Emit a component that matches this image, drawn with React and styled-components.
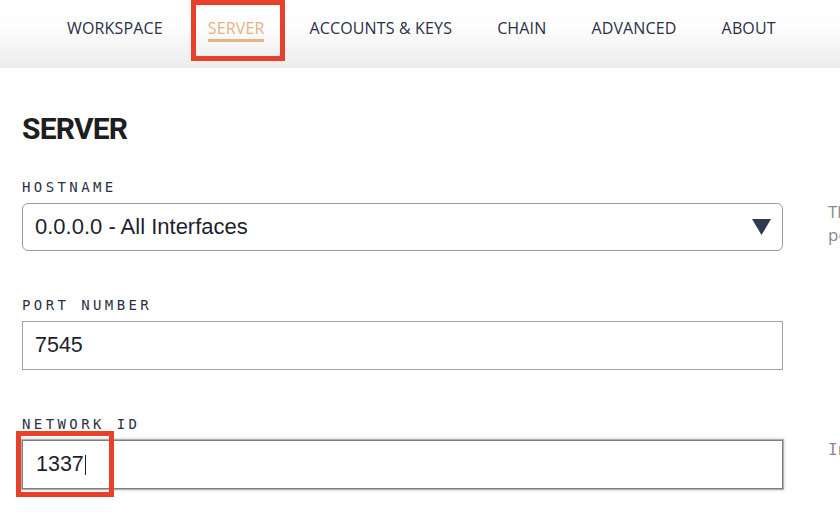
import React from 'react';
import styled, { createGlobalStyle, css } from 'styled-components';

// --- Styled Components ---
const GlobalStyle = createGlobalStyle`
  html, body {
    margin: 0;
    padding: 0;
    background: #ffffff;
    overflow: hidden;
  }
  *, *::before, *::after {
    box-sizing: border-box;
  }
`;

const Page = styled.div`
  width: 840px;
  height: 532px;
  overflow: hidden;
  background: #ffffff;
`;

const TopNav = styled.nav`
  display: flex;
  align-items: flex-start;
  gap: 45px;
  height: 68px;
  padding: 18px 0 0 67px;
  background: linear-gradient(to bottom, #ffffff 0%, #fdfdfd 40%, #ececec 100%);
`;

const NavItem = styled.div`
  position: relative;
  font-family: 'Open Sans', 'Noto Sans', sans-serif;
  font-size: 16px;
  line-height: 20px;
  letter-spacing: 0.15px;
  white-space: nowrap;
  color: ${(p) => (p.$active ? '#e2b583' : '#2b3046')};
  padding-bottom: 1px;
  border-bottom: 3px solid ${(p) => (p.$active ? '#e2b583' : 'transparent')};

  ${(p) =>
    p.$marked &&
    css`
      &::after {
        content: '';
        position: absolute;
        top: -18px;
        left: -17px;
        right: -21px;
        height: 61px;
        border: 5px solid #e8412b;
      }
    `}
`;

const Content = styled.main`
  width: 1400px;
  padding: 46px 0 0 22px;
`;

const Heading = styled.h1`
  margin: 0 0 33px;
  font-family: Roboto, 'Liberation Sans', sans-serif;
  font-weight: 700;
  font-size: 30px;
  line-height: 30px;
  letter-spacing: -0.8px;
  color: #1e1e1e;
`;

const FieldRow = styled.section`
  display: grid;
  grid-template-columns: 761px 560px;
  column-gap: 45px;
  margin-bottom: 44px;
`;

const Label = styled.label`
  grid-column: 1;
  display: block;
  margin-bottom: 6px;
  font-family: 'DejaVu Sans Mono', 'Liberation Mono', monospace;
  font-size: 14px;
  line-height: 20px;
  letter-spacing: 3.4px;
  color: #2b3046;
`;

const boxText = css`
  font-family: 'Liberation Sans', Arial, sans-serif;
  color: #1d1f2e;
`;

const SelectBox = styled.div`
  grid-column: 1;
  display: flex;
  align-items: center;
  justify-content: space-between;
  height: 48px;
  padding: 0 11px 0 12px;
  border: 1px solid #9a9a9a;
  border-radius: 6px;
  background: #ffffff;
  font-size: 22px;
  ${boxText}
`;

const InputBox = styled.div`
  grid-column: 1;
  position: relative;
  display: flex;
  align-items: center;
  height: 49px;
  padding: 0 12px;
  background: #ffffff;
  font-size: 21.5px;
  ${boxText}
  border: 1px solid ${(p) => (p.$focused ? '#7f7f7f' : '#a2a2a2')};
  ${(p) =>
    p.$focused &&
    css`
      padding-left: 13px;
      box-shadow: 0 0 0 1px #b0b0b0, 0 0 3px 1px rgba(0, 0, 0, 0.22);
    `}
`;

const Caret = styled.span`
  display: inline-block;
  width: 1px;
  height: 20px;
  margin-left: 1px;
  background: #1d1f2e;
`;

const Mark = styled.span`
  position: absolute;
  top: -10px;
  left: -7px;
  width: 98px;
  height: 66px;
  border: 5px solid #e8412b;
  pointer-events: none;
`;

const Help = styled.p`
  grid-column: 2;
  margin: ${(p) => (p.$mono ? '-2px 0 0' : '-3px 0 0')};
  white-space: pre-line;
  font-family: ${(p) =>
    p.$mono
      ? "'DejaVu Sans Mono', 'Liberation Mono', monospace"
      : "'Open Sans', 'Noto Sans', sans-serif"};
  font-size: ${(p) => (p.$mono ? '16px' : '17px')};
  line-height: 23px;
  color: #8a8a8a;
`;
// --- End of Styled Components ---

const ArrowDown = () => (
  <svg width="19" height="16" viewBox="0 0 19 16" aria-hidden="true">
    <polygon points="0,0 19,0 9.5,16" fill="#2e3a4f" />
  </svg>
);

const navItems = ['WORKSPACE', 'SERVER', 'ACCOUNTS & KEYS', 'CHAIN', 'ADVANCED', 'ABOUT'];

const App = () => {
  return (
    <Page>
      <GlobalStyle />
      <TopNav>
        {navItems.map((item) => (
          <NavItem key={item} $active={item === 'SERVER'} $marked={item === 'SERVER'}>
            {item}
          </NavItem>
        ))}
      </TopNav>

      <Content>
        <Heading>SERVER</Heading>

        <FieldRow>
          <Label>HOSTNAME</Label>
          <SelectBox>
            <span>0.0.0.0 - All Interfaces</span>
            <ArrowDown />
          </SelectBox>
          <Help>{'The server will accept RPC connections on the following host and\nport.'}</Help>
        </FieldRow>

        <FieldRow>
          <Label>PORT NUMBER</Label>
          <InputBox>7545</InputBox>
        </FieldRow>

        <FieldRow>
          <Label>NETWORK ID</Label>
          <InputBox $focused>
            1337
            <Caret />
            <Mark />
          </InputBox>
          <Help $mono>Internal blockchain identifier of Ganache server.</Help>
        </FieldRow>
      </Content>
    </Page>
  );
};

export default App;
